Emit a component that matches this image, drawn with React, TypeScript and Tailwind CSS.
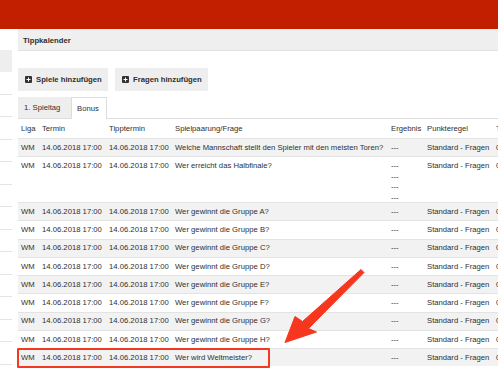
import React from 'react';

// small dark "plus square" used on the toolbar buttons
const PlusSquare = () => (
  <svg width="7" height="7" viewBox="0 0 7 7" className="shrink-0">
    <rect x="0" y="0" width="7" height="7" rx="1" fill="#333" />
    <rect x="3" y="1.5" width="1" height="4" fill="#fff" />
    <rect x="1.5" y="3" width="4" height="1" fill="#fff" />
  </svg>
);

const cols = 'grid grid-cols-[21px_67px_66px_216px_36px_69px_40px] w-[515px]';

const groups = ['A', 'B', 'C', 'D', 'E', 'F', 'G', 'H'];

const rows = [
  { q: 'Welche Mannschaft stellt den Spieler mit den meisten Toren?', multi: false },
  { q: 'Wer erreicht das Halbfinale?', multi: true },
  ...groups.map((g) => ({ q: `Wer gewinnt die Gruppe ${g}?`, multi: false })),
  { q: 'Wer wird Weltmeister?', multi: false },
];

const DATE = '14.06.2018 17:00';

export default function App() {
  return (
    <div className="relative w-[498px] h-[373px] overflow-hidden bg-white text-[7.7px] text-[#2f2f2f] font-['Liberation_Sans',Arial,sans-serif]">
      {/* top bar */}
      <div className="h-[29px] bg-[#c11f00]" />

      <div className="flex">
        {/* sidebar stub */}
        <aside className="w-[12px] flex flex-col shrink-0">
          <div className="h-[21px]" />
          <div className="h-[22px] bg-[#eeeeee]" />
          {Array.from({ length: 13 }).map((_, i) => (
            <div key={i} className="h-[22.5px] border-b border-[#e4e4e4]" />
          ))}
        </aside>

        <main className="ml-[6px] flex-1 min-w-0">
          {/* panel header */}
          <div className="h-[22px] bg-[#efefef] border-b border-[#e2e2e2] px-[5px] pt-[2px] flex items-center font-bold">
            Tippkalender
          </div>

          {/* toolbar */}
          <div className="mt-[17px] flex gap-[7px]">
            <button className="h-[23px] w-[90px] pl-[7px] bg-[#eeeeee] flex items-center gap-[4px] font-bold">
              <PlusSquare />
              Spiele hinzufügen
            </button>
            <button className="h-[23px] w-[93px] pl-[7px] bg-[#eeeeee] flex items-center gap-[4px] font-bold">
              <PlusSquare />
              Fragen hinzufügen
            </button>
          </div>

          {/* tabs */}
          <div className="mt-[6px] h-[22px] flex items-end border-b border-[#dddddd]">
            <div className="h-[21px] w-[53px] pl-[6px] flex items-center bg-[#eeeeee]">1. Spieltag</div>
            <div className="h-[22px] w-[36px] pl-[5px] flex items-center bg-white border border-b-0 border-[#dddddd] -mb-px">
              Bonus
            </div>
          </div>

          {/* table */}
          <div className={`${cols} h-[19px] pt-[1px] items-center`}>
            <div className="pl-[3px]">Liga</div>
            <div className="pl-[3px]">Termin</div>
            <div className="pl-[3px]">Tipptermin</div>
            <div className="pl-[3px]">Spielpaarung/Frage</div>
            <div className="pl-[3px]">Ergebnis</div>
            <div className="pl-[3px]">Punkteregel</div>
            <div className="pl-[3px]">Tipps</div>
          </div>

          {rows.map((r, i) => {
            const bg = i % 2 === 0 ? 'bg-[#f2f2f2]' : 'bg-white';
            if (r.multi) {
              return (
                <div key={i} className={`${cols} ${bg} h-[46px] border-t border-[#e3e3e3] py-[4px] leading-[10.5px] whitespace-nowrap`}>
                  <div className="pl-[3px]">WM</div>
                  <div className="pl-[3px]">{DATE}</div>
                  <div className="pl-[3px]">{DATE}</div>
                  <div className="pl-[3px]">{r.q}</div>
                  <div className="pl-[3px] flex flex-col">
                    <span>---</span>
                    <span>---</span>
                    <span>---</span>
                    <span>---</span>
                  </div>
                  <div className="pl-[3px]">Standard - Fragen</div>
                  <div className="pl-[3px]">0</div>
                </div>
              );
            }
            return (
              <div
                key={i}
                className={`${cols} ${bg} ${i === 0 ? 'h-[18px]' : 'h-[18.25px]'} border-t border-[#e3e3e3] items-center whitespace-nowrap`}
              >
                <div className="pl-[3px]">WM</div>
                <div className="pl-[3px]">{DATE}</div>
                <div className="pl-[3px]">{DATE}</div>
                <div className="pl-[3px]">{r.q}</div>
                <div className="pl-[3px]">---</div>
                <div className="pl-[3px]">Standard - Fragen</div>
                <div className="pl-[3px]">0</div>
              </div>
            );
          })}
        </main>
      </div>

      {/* annotation: highlight box */}
      <div className="absolute left-[17px] top-[348px] w-[253px] h-[20px] border-2 border-[#f23a22] rounded-[1px]" />

      {/* annotation: arrow */}
      <svg className="absolute left-0 top-0 pointer-events-none" width="498" height="373">
        <polygon
          points="361,269.5 302.5,321.5 295,316.5 285,342.5 316.5,332 308.5,328.5 364,272.5"
          fill="#f7361f"
          stroke="#f7361f"
          strokeWidth="1"
          strokeLinejoin="round"
        />
      </svg>
    </div>
  );
}
